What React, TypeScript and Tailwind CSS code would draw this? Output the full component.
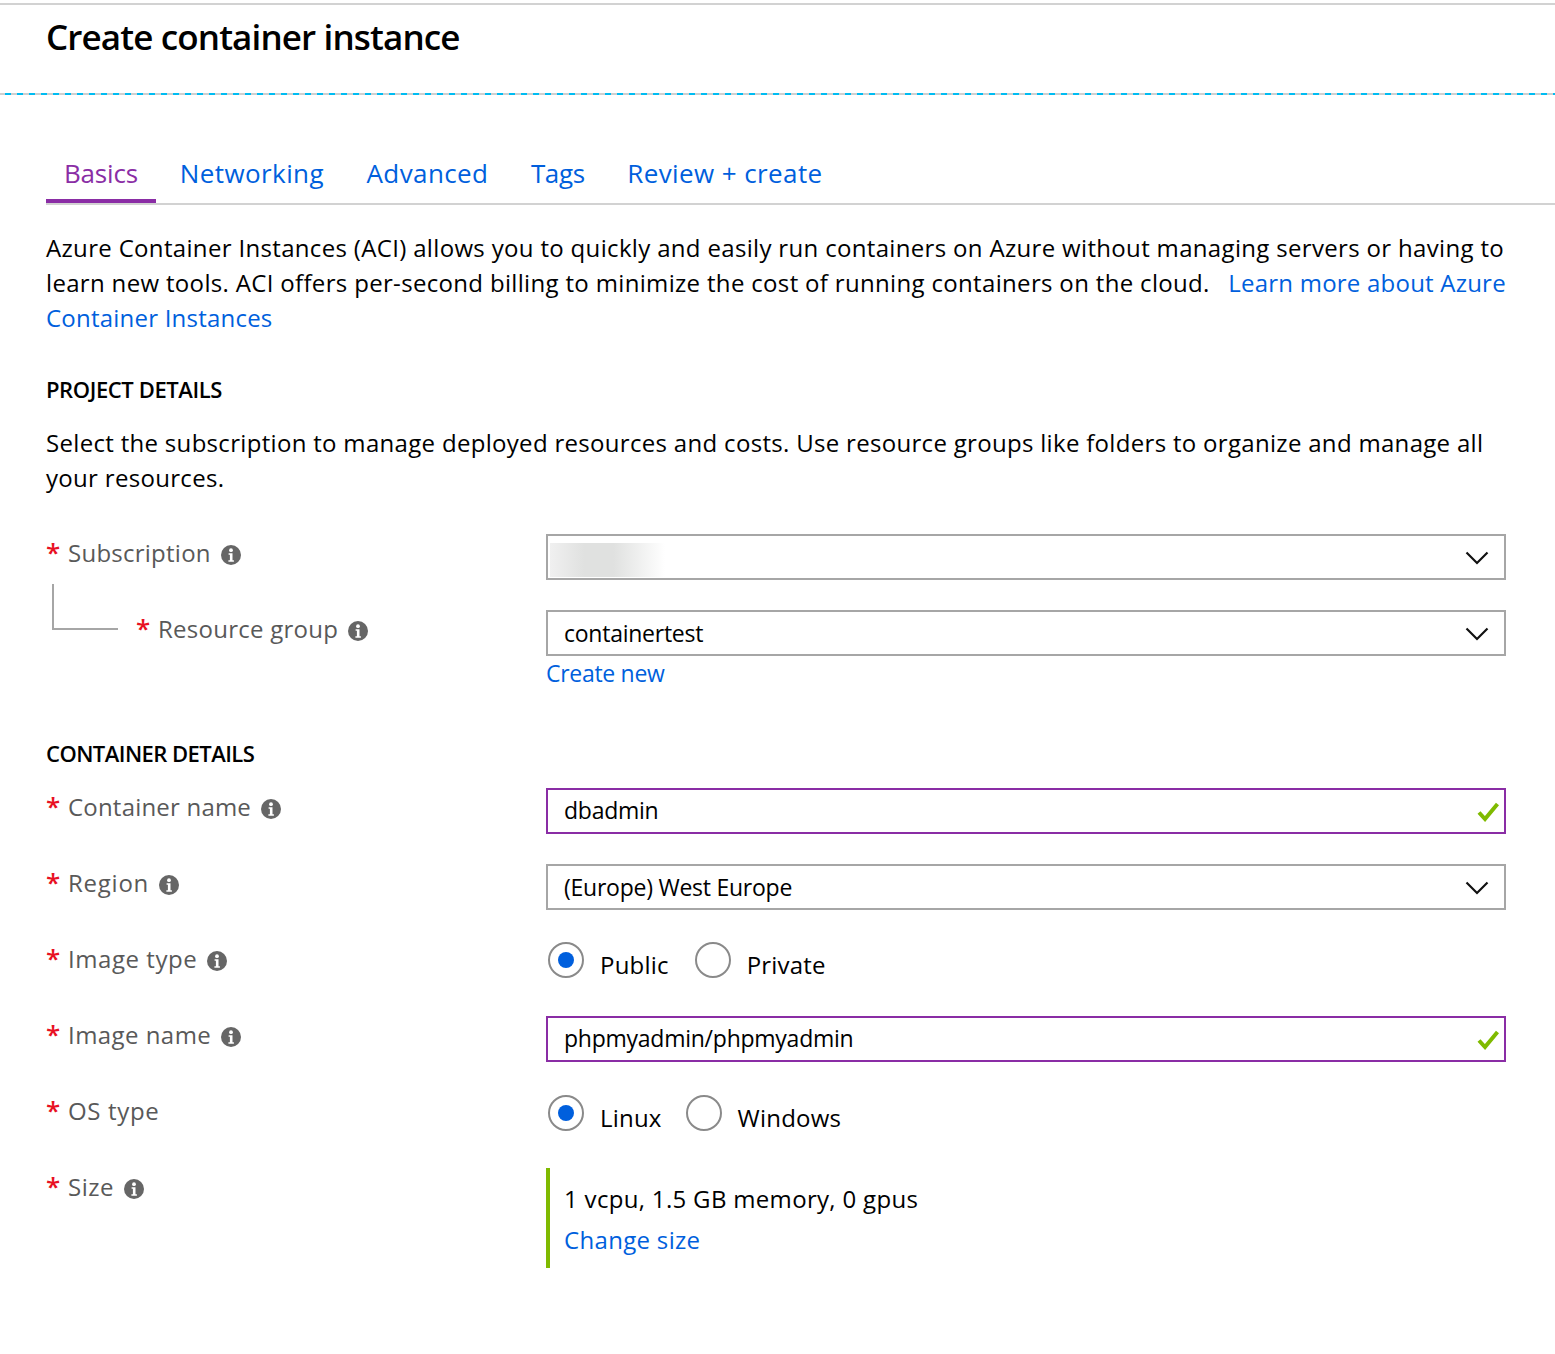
import React from 'react';

const font = "font-['Open_Sans','Noto_Sans',sans-serif]";

function InfoIcon() {
  return (
    <svg className="ml-[10px] mt-[10px] h-5 w-5 shrink-0" viewBox="0 0 20 20">
      <circle cx="10" cy="10" r="10" fill="#666666" />
      <circle cx="10" cy="5.2" r="1.9" fill="#ffffff" />
      <path d="M7.6 8.2h3.9v7h1.4v1.6H7.4v-1.6h1.5V9.8H7.6z" fill="#ffffff" />
    </svg>
  );
}

function Label({
  text,
  info = true,
  indent = false,
  tracking = 'tracking-[0.25px]',
}: {
  text: string;
  info?: boolean;
  indent?: boolean;
  tracking?: string;
}) {
  return (
    <div className={`flex w-[500px] shrink-0 items-start pt-[1px] ${indent ? 'pl-[90px]' : ''}`}>
      <span className="w-[22px] text-[26px] font-semibold leading-[34px] text-[#e81123]">*</span>
      <span className={`text-[24px] leading-[36px] text-[#595959] ${tracking}`}>{text}</span>
      {info && <InfoIcon />}
    </div>
  );
}

function Chevron() {
  return (
    <svg className="mt-[2px] h-[14px] w-[24px]" viewBox="0 0 24 14" fill="none" stroke="#111111" strokeWidth="2.2">
      <path d="M1.5 1.5 12 12 22.5 1.5" />
    </svg>
  );
}

function Check() {
  return (
    <svg className="mt-[2px] h-[20px] w-[22px]" viewBox="0 0 22 20" fill="none" stroke="#7fba00" strokeWidth="4">
      <path d="M2 10.5 8 17 20.5 2" />
    </svg>
  );
}

function Field({ value, valid = false }: { value?: string; valid?: boolean }) {
  return (
    <div
      className={`flex h-[46px] w-[960px] items-center justify-between border-2 ${
        valid ? 'border-[#8a2da5] pr-[5px]' : 'border-[#a6a6a6] pr-[15px]'
      } pl-[16px]`}
    >
      <span className={`text-[23px] tracking-[-0.25px] text-black ${valid ? 'mt-[-1px]' : ''}`}>{value}</span>
      {valid ? <Check /> : <Chevron />}
    </div>
  );
}

function Radio({ label, checked = false }: { label: string; checked?: boolean }) {
  return (
    <div className="flex items-start">
      <span className="flex h-[36px] w-[36px] items-center justify-center rounded-full border-2 border-[#8a8a8a]">
        {checked && <span className="h-4 w-4 rounded-full bg-[#005fdd]" />}
      </span>
      <span className="ml-[16px] mt-[4.5px] text-[24px] leading-[36px] tracking-[0.2px] text-black">{label}</span>
    </div>
  );
}

const tabs = ['Networking', 'Advanced', 'Tags', 'Review + create'];

export default function App() {
  return (
    <div className={`${font} h-[1354px] w-[1555px] overflow-hidden bg-white pt-[3px]`}>
      <div className="h-[2px] bg-[#d2d2d2]" />
      <div className="h-[88px] pl-[46px] pt-[7px] text-[35px] font-semibold leading-[50px] tracking-[-0.87px] text-black">
        Create container instance
      </div>
      <div className="h-[2px] bg-[repeating-linear-gradient(90deg,#cfcfcf_0,#cfcfcf_5px,#00bcf2_5px,#00bcf2_11px,#cfcfcf_11px,#cfcfcf_12px)]" />

      <div className="ml-[46px] mt-[55px] flex h-[55px] items-stretch border-b-2 border-[#d2d2d2] text-[26px] tracking-[0.4px]">
        <div className="flex items-center border-b-[4px] border-[#8a2da5] px-[18px] pb-[2px] tracking-[-0.2px] text-[#8a2da5]">
          Basics
        </div>
        {tabs.map((tab) => (
          <div
            key={tab}
            className={`ml-[24px] mr-[18.5px] flex items-center pb-[6px] text-[#005fdd] ${
              tab === 'Tags' ? 'tracking-[-0.35px]' : ''
            }`}
          >
            {tab}
          </div>
        ))}
      </div>

      <div className="px-[46px]">
        <p className="mt-[25px] w-[1470px] text-[24px] leading-[35px] tracking-[0.33px] text-black">
          Azure Container Instances (ACI) allows you to quickly and easily run containers on Azure without managing servers or having to learn new tools. ACI offers per-second billing to minimize the cost of running containers on the cloud.{' '}
          <span className="ml-[12px] tracking-[0.22px] text-[#005fdd]">Learn more about Azure Container Instances</span>
        </p>

        <h2 className="mt-[38px] text-[22px] font-semibold leading-[32px] tracking-[-0.4px] text-black">PROJECT DETAILS</h2>
        <p className="mt-[20px] w-[1460px] text-[24px] leading-[35px] tracking-[0.31px] text-black">
          Select the subscription to manage deployed resources and costs. Use resource groups like folders to organize and manage all your resources.
        </p>

        <div className="mt-[39px] flex">
          <Label text="Subscription" />
          <div className="relative">
            <Field />
            <div className="absolute left-[4px] top-[9px] h-[34px] w-[115px] bg-[linear-gradient(90deg,#f0f0f0,#e0e1e0_30%,#e0e1e0_55%,#ffffff)]" />
          </div>
        </div>

        <div className="relative mt-[30px] flex">
          <div className="absolute left-[6px] top-[-26px] h-[46px] w-[66px] border-b-2 border-l-2 border-[#a6a6a6]" />
          <Label text="Resource group" indent />
          <div>
            <Field value="containertest" />
            <div className="text-[23px] leading-[34px] tracking-[-0.3px] text-[#005fdd]">Create new</div>
          </div>
        </div>

        <h2 className="mt-[47px] text-[22px] font-semibold leading-[32px] tracking-[-0.55px] text-black">CONTAINER DETAILS</h2>

        <div className="mt-[19px] flex">
          <Label text="Container name" tracking="tracking-[0.2px]" />
          <Field value="dbadmin" valid />
        </div>
        <div className="mt-[30px] flex">
          <Label text="Region" tracking="tracking-[0.75px]" />
          <Field value="(Europe) West Europe" />
        </div>
        <div className="mt-[30px] flex h-[46px]">
          <Label text="Image type" tracking="tracking-[0.55px]" />
          <div className="flex items-start gap-[26px] pl-[2px] pt-[2px]">
            <Radio label="Public" checked />
            <Radio label="Private" />
          </div>
        </div>
        <div className="mt-[30px] flex">
          <Label text="Image name" tracking="tracking-[0.45px]" />
          <Field value="phpmyadmin/phpmyadmin" valid />
        </div>
        <div className="mt-[30px] flex h-[46px]">
          <Label text="OS type" info={false} tracking="tracking-[0.65px]" />
          <div className="flex items-start gap-[24px] pl-[2px] pt-[3px]">
            <Radio label="Linux" checked />
            <Radio label="Windows" />
          </div>
        </div>
        <div className="mt-[30px] flex">
          <Label text="Size" tracking="tracking-[0.5px]" />
          <div className="h-[100px] border-l-[4px] border-[#7fba00] pl-[14px] pt-[10px] text-[24px] leading-[41px] tracking-[0.32px]">
            <div className="text-black">1 vcpu, 1.5 GB memory, 0 gpus</div>
            <div className="text-[#005fdd]">Change size</div>
          </div>
        </div>
      </div>
    </div>
  );
}
